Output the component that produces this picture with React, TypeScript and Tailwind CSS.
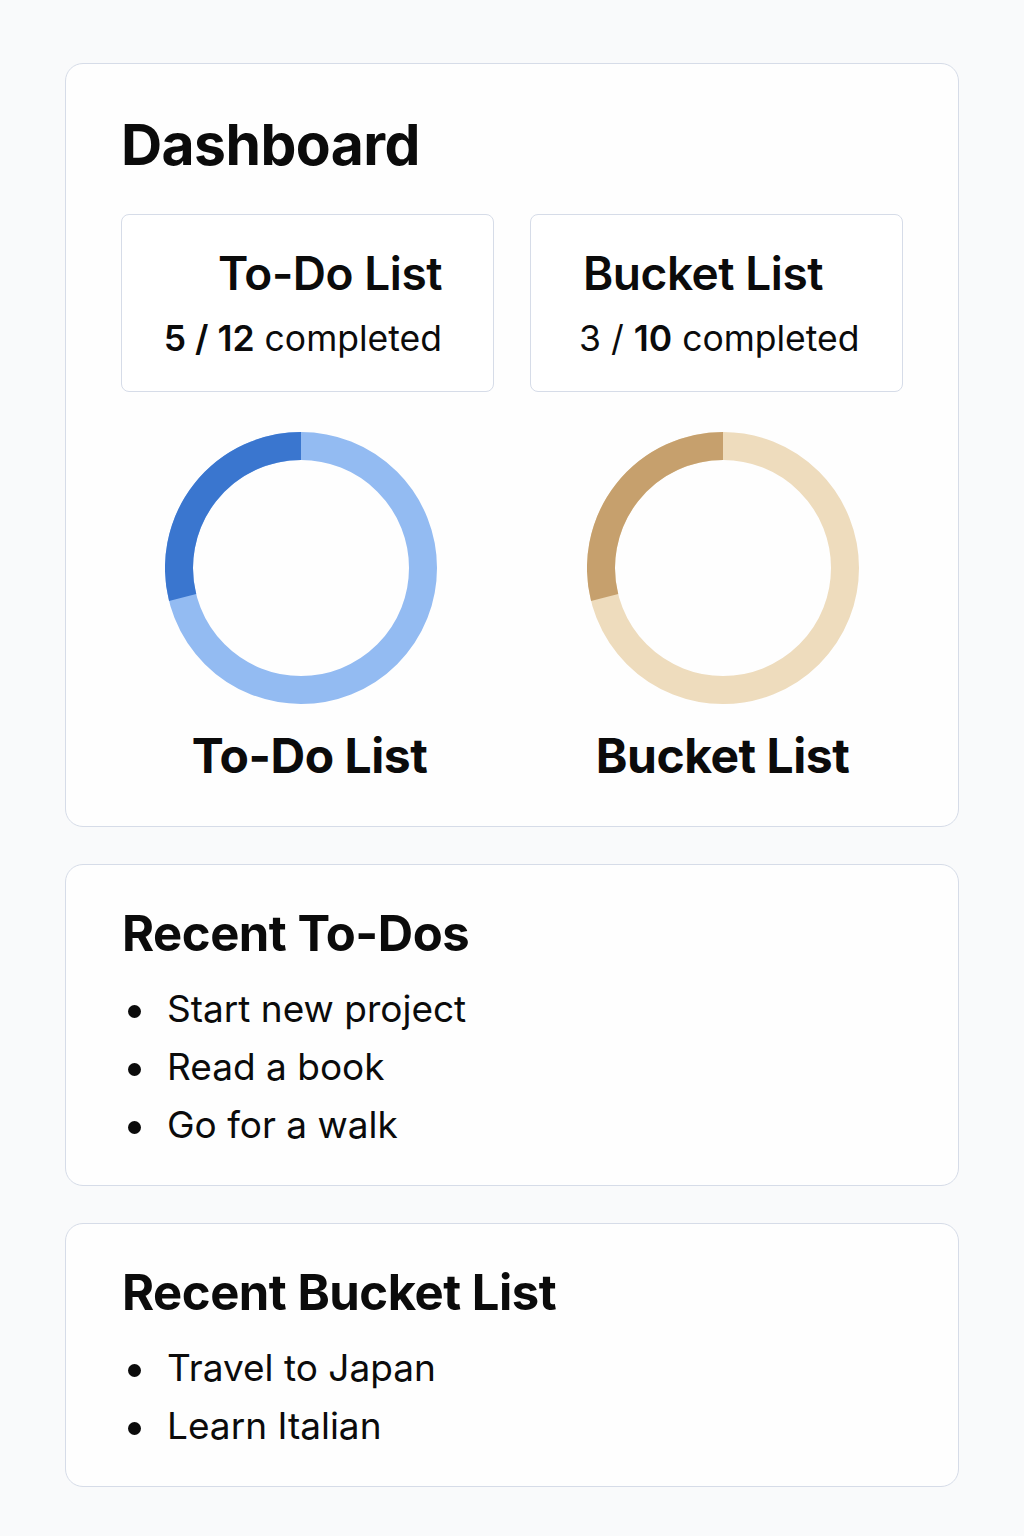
import React from 'react';

type Stat = { title: string; done: number; total: number; dark: string; light: string };

const STATS: Stat[] = [
  { title: 'To-Do List', done: 5, total: 12, dark: '#3a76cf', light: '#93bbf2' },
  { title: 'Bucket List', done: 3, total: 10, dark: '#c6a06d', light: '#eedcbd' },
];

const RECENT_TODOS = ['Start new project', 'Read a book', 'Go for a walk'];
const RECENT_BUCKET = ['Travel to Japan', 'Learn Italian'];

// ring drawn from 12 o'clock, counter-clockwise for the completed part
const Donut: React.FC<{ dark: string; light: string; angle: number }> = ({ dark, light, angle }) => {
  const c = 136;
  const r = 122;
  const rad = (angle * Math.PI) / 180;
  const x = c - r * Math.sin(rad);
  const y = c - r * Math.cos(rad);
  return (
    <svg width="272" height="272" viewBox="0 0 272 272">
      <circle cx={c} cy={c} r={r} fill="none" stroke={light} strokeWidth="28" />
      <path
        d={`M ${c} ${c - r} A ${r} ${r} 0 0 0 ${x.toFixed(2)} ${y.toFixed(2)}`}
        fill="none"
        stroke={dark}
        strokeWidth="28"
      />
    </svg>
  );
};

const RecentCard: React.FC<{ title: string; items: string[] }> = ({ title, items }) => (
  <section className="bg-[#fefefe] border border-[#d6dce8] rounded-[18px] px-[56px] pt-[44px] pb-[31px]">
    <h2 className="text-[49px] leading-none font-bold tracking-[-0.01em]">{title}</h2>
    <ul className="mt-[22px]">
      {items.map((item) => (
        <li key={item} className="flex items-center text-[37px] leading-[58px]">
          <span className="w-[13px] h-[13px] rounded-full bg-[#0b0b0b] ml-[6px] mr-[26px] mt-[4px] shrink-0" />
          {item}
        </li>
      ))}
    </ul>
  </section>
);

const App: React.FC = () => {
  return (
    <div className="min-h-screen bg-[#f9fafb] text-[#0b0b0b] px-[65px] pt-[63px] pb-[50px] font-['Inter',sans-serif]">
      <div className="space-y-[37px]">
        {/* Dashboard */}
        <section className="bg-[#fefefe] border border-[#d6dce8] rounded-[18px] px-[55px] pt-[52px] pb-[46px]">
          <h1 className="text-[57px] leading-none font-bold tracking-[-0.01em]">Dashboard</h1>

          <div className="mt-[41px] grid grid-cols-2 gap-[36px]">
            <div className="h-[178px] border border-[#d6dce8] rounded-[8px] bg-white flex flex-col items-end justify-center pr-[51px]">
              <div className="text-[46px] leading-none font-semibold tracking-[-0.01em]">To-Do List</div>
              <div className="mt-[25px] text-[35.5px] leading-none">
                <span className="font-semibold">5 / 12</span> completed
              </div>
            </div>
            <div className="h-[178px] border border-[#d6dce8] rounded-[8px] bg-white flex flex-col items-start justify-center pl-[48px]">
              <div className="ml-[4px] text-[46px] leading-none font-semibold tracking-[-0.01em]">Bucket List</div>
              <div className="mt-[25px] text-[35.5px] leading-none">
                3 / <span className="font-semibold">10</span> completed
              </div>
            </div>
          </div>

          <div className="mt-[40px] grid grid-cols-2 gap-[36px]">
            {STATS.map((s, i) => (
              <div key={s.title} className="flex flex-col items-center">
                <div className={i === 0 ? 'mr-[13px]' : 'ml-[12px]'}>
                  <Donut dark={s.dark} light={s.light} angle={104} />
                </div>
                <div className={`mt-[28px] text-[48px] leading-none font-bold tracking-[-0.01em] ${i === 0 ? 'ml-[4px]' : 'ml-[12px]'}`}>
                  {s.title}
                </div>
              </div>
            ))}
          </div>
        </section>

        <RecentCard title="Recent To-Dos" items={RECENT_TODOS} />
        <RecentCard title="Recent Bucket List" items={RECENT_BUCKET} />
      </div>
    </div>
  );
};

export default App;
